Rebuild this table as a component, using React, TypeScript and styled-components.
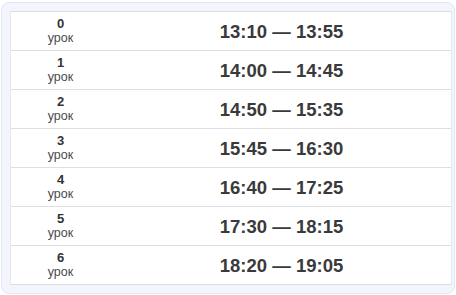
import React from 'react';
import styled, { createGlobalStyle } from 'styled-components';

const lessons = [
  { n: 0, from: '13:10', to: '13:55' },
  { n: 1, from: '14:00', to: '14:45' },
  { n: 2, from: '14:50', to: '15:35' },
  { n: 3, from: '15:45', to: '16:30' },
  { n: 4, from: '16:40', to: '17:25' },
  { n: 5, from: '17:30', to: '18:15' },
  { n: 6, from: '18:20', to: '19:05' },
];

const GlobalStyle = createGlobalStyle`
  body {
    margin: 0;
    background: #ffffff;
    font-family: "Liberation Sans", Arial, sans-serif;
  }
`;

const Card = styled.div`
  margin: 2px 1px 0 1px;
  width: 454px;
  box-sizing: border-box;
  padding: 8px 2px 8px 8px;
  background-color: #f2f6fc;
  border: 1px solid #e2e8f2;
  border-radius: 8px;
`;

const Table = styled.div`
  background-color: #ffffff;
  border-top: 1px solid #dcdfe3;
  border-left: 1px solid #e6e9ec;
  border-right: 1px solid #e6e9ec;
`;

const Row = styled.div`
  display: grid;
  grid-template-columns: 99px 1fr;
  height: 38px;
  border-bottom: 1px solid #dcdfe3;
`;

const LessonCell = styled.div`
  display: flex;
  flex-direction: column;
  align-items: center;
  justify-content: center;
`;

const Number = styled.div`
  font-size: 13px;
  font-weight: 700;
  line-height: 14px;
  color: #333;
`;

const Label = styled.div`
  font-size: 12.5px;
  line-height: 15px;
  color: #4a4a4a;
`;

const TimeCell = styled.div`
  display: flex;
  align-items: center;
  justify-content: center;
  font-size: 18.5px;
  font-weight: 700;
  color: #3a3a3a;
  padding: 2px 0 0 2px;
`;

export default function App() {
  return (
    <>
      <GlobalStyle />
      <Card>
        <Table>
          {lessons.map((l) => (
            <Row key={l.n}>
              <LessonCell>
                <Number>{l.n}</Number>
                <Label>урок</Label>
              </LessonCell>
              <TimeCell>
                {l.from} — {l.to}
              </TimeCell>
            </Row>
          ))}
        </Table>
      </Card>
    </>
  );
}
